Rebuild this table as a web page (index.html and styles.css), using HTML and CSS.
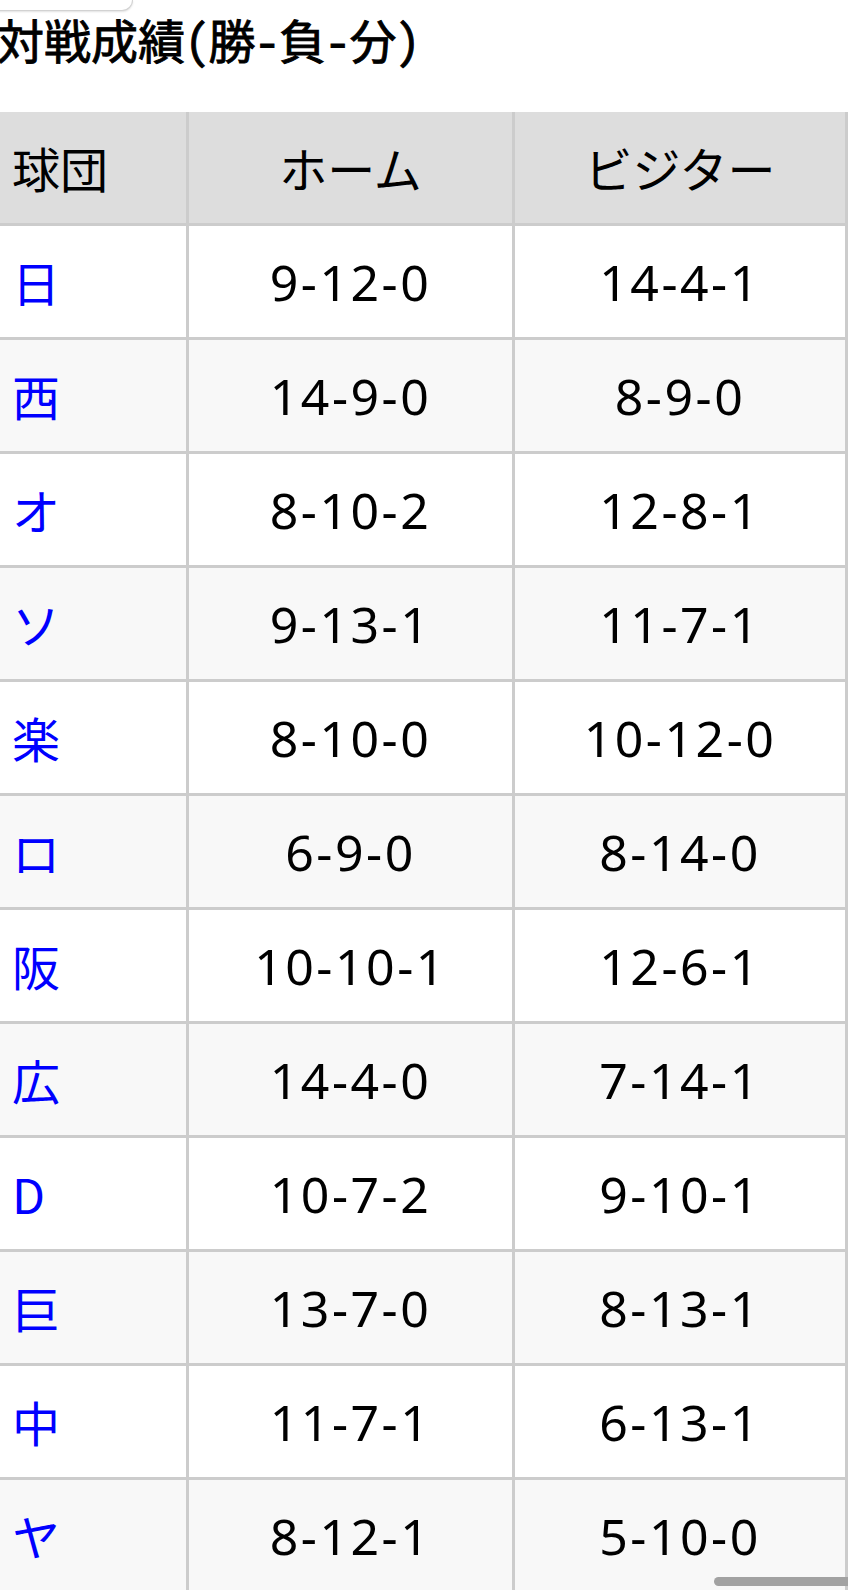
FILE: index.html
```html
<!DOCTYPE html>
<html lang="ja">
<head>
<meta charset="utf-8">
<title>対戦成績</title>
<link rel="stylesheet" href="styles.css">
</head>
<body>
<div class="page">
  <div class="topbox"></div>
  <h2 class="title">対戦成績(勝-負-分)</h2>
  <table class="record">
    <thead>
      <tr><th class="team">球団</th><th class="home">ホーム</th><th class="visitor">ビジター</th></tr>
    </thead>
    <tbody>
      <tr><td class="team"><a href="#">日</a></td><td class="num">9-12-0</td><td class="num">14-4-1</td></tr>
      <tr><td class="team"><a href="#">西</a></td><td class="num">14-9-0</td><td class="num">8-9-0</td></tr>
      <tr><td class="team"><a href="#">オ</a></td><td class="num">8-10-2</td><td class="num">12-8-1</td></tr>
      <tr><td class="team"><a href="#">ソ</a></td><td class="num">9-13-1</td><td class="num">11-7-1</td></tr>
      <tr><td class="team"><a href="#">楽</a></td><td class="num">8-10-0</td><td class="num">10-12-0</td></tr>
      <tr><td class="team"><a href="#">ロ</a></td><td class="num">6-9-0</td><td class="num">8-14-0</td></tr>
      <tr><td class="team"><a href="#">阪</a></td><td class="num">10-10-1</td><td class="num">12-6-1</td></tr>
      <tr><td class="team"><a href="#">広</a></td><td class="num">14-4-0</td><td class="num">7-14-1</td></tr>
      <tr><td class="team"><a href="#">D</a></td><td class="num">10-7-2</td><td class="num">9-10-1</td></tr>
      <tr><td class="team"><a href="#">巨</a></td><td class="num">13-7-0</td><td class="num">8-13-1</td></tr>
      <tr><td class="team"><a href="#">中</a></td><td class="num">11-7-1</td><td class="num">6-13-1</td></tr>
      <tr><td class="team"><a href="#">ヤ</a></td><td class="num">8-12-1</td><td class="num">5-10-0</td></tr>
    </tbody>
  </table>
</div>
<div class="scrollthumb"></div>
</body>
</html>
```

FILE: styles.css
```css
html, body {
  margin: 0;
  padding: 0;
  background: #fff;
  overflow: hidden;
}
body {
  height: 1590px;
  font-family: "Noto Sans CJK JP", "Noto Sans", sans-serif;
  color: #000;
}
.page {
  margin-left: -3px;
}
.topbox {
  width: 147px;
  height: 10px;
  margin-left: -13px;
  background: #fff;
  border: 1px solid #d2d2d2;
  border-top: 0;
  border-radius: 0 0 12px 12px;
  box-shadow: 0 1px 2px rgba(0, 0, 0, 0.12);
}
.title {
  margin: 0 0 45px;
  font-family: "Noto Sans CJK JP", sans-serif;
  font-size: 47px;
  line-height: 56px;
  font-weight: 400;
  -webkit-text-stroke: 0.9px #000;
  font-feature-settings: "hwid";
  white-space: nowrap;
}
.record {
  border-collapse: separate;
  border-spacing: 0;
  table-layout: fixed;
  width: 851px;
  border-left: 3px solid #ccc;
}
.record tr {
  height: 114px;
}
.record th,
.record td {
  box-sizing: border-box;
  padding: 0;
  border-right: 3px solid #ccc;
  border-bottom: 3px solid #ccc;
  vertical-align: middle;
  text-align: center;
  font-weight: 400;
  font-size: 48px;
  line-height: 1.2;
  white-space: nowrap;
}
.record th {
  background: #ddd;
}
.record th.team { width: 189px; }
.record th.home { width: 326px; }
.record th.visitor { width: 333px; }
.record .team {
  text-align: left;
  padding-left: 12px;
}
.record tbody tr:nth-child(odd) td {
  background: #fff;
}
.record tbody tr:nth-child(even) td {
  background: #f8f8f8;
}
.record .team a {
  color: #00f;
  text-decoration: none;
}
.record td.num {
  font-family: "Noto Sans", sans-serif;
  font-size: 50px;
  letter-spacing: 2.5px;
}
.scrollthumb {
  position: fixed;
  left: 714px;
  bottom: 4px;
  width: 150px;
  height: 9px;
  border-radius: 5px;
  background: #a2a2a2;
}
```
